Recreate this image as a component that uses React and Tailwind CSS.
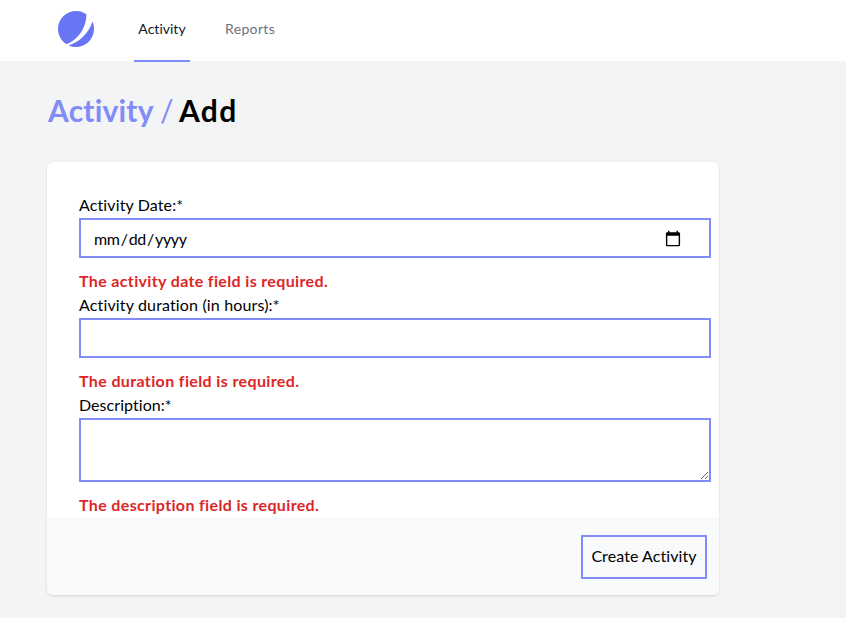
import React from "react";

function Logo() {
  return (
    <svg className="h-9 w-9" viewBox="0 0 48 48" fill="none">
      <path fill="#6875F5" d="M11.395 44.428C4.557 40.198 0 32.632 0 24 0 10.745 10.745 0 24 0a23.891 23.891 0 0113.997 4.502c-.2 17.907-11.097 33.245-26.602 39.926z" />
      <path fill="#6875F5" d="M14.134 45.885A23.914 23.914 0 0024 48c13.255 0 24-10.745 24-24 0-3.516-.756-6.856-2.115-9.866-4.659 15.143-16.608 27.092-31.75 31.751z" />
    </svg>
  );
}

function Field({ label, labelClass, error, errorClass, children }) {
  return (
    <div>
      <label className="flex h-6 items-center pb-0.5 whitespace-nowrap"><span className={labelClass}>{label}</span></label>
      {children}
      <p className="mt-3 flex h-6 items-center pb-0.5 font-bold whitespace-nowrap text-[#dc2626]"><span className={errorClass}>{error}</span></p>
    </div>
  );
}

export default function App() {
  return (
    <div className="min-h-[618px] bg-[#f3f4f6] font-['Lato',sans-serif] text-base leading-6 text-black">
      <nav className="flex h-[62px] bg-linear-to-b from-white from-[61px] to-[#f3f4f6] to-[61px] pl-[58px] text-sm">
        <div className="pt-[11px]"><Logo /></div>
        <a className="ml-10 flex w-14 justify-center border-b-2 border-[#818cf8] pt-[19px] text-[#111827]"><span className="tracking-[0.01px]">Activity</span></a>
        <a className="ml-[35px] pt-[19px] text-[#6b7280]"><span className="tracking-[0.35px]">Reports</span></a>
      </nav>
      <main className="pl-[47px]">
        <h1 className="flex h-[100px] items-start pt-[30px] text-[30px] leading-9 font-bold">
          <span className="w-[113px] pl-px tracking-[0.2px] text-[#818cf8]">Activity</span>
          <span className="w-[18px] font-normal text-[#818cf8]">/</span>
          <span className="pl-px tracking-[1.3px]">Add</span>
        </h1>
        <form className="w-[672px] overflow-hidden rounded-md bg-white shadow-sm">
          <div className="pt-8 pr-2 pl-8">
            <Field label="Activity Date:*" labelClass="tracking-[0.12px]" error="The activity date field is required." errorClass="tracking-[0.35px]">
              <input type="date" className="block h-10 w-full border-2 border-[#818cf8] bg-white pt-[9px] pr-[25px] pb-[7px] pl-3 tracking-[-0.3px] [&::-webkit-calendar-picker-indicator]:h-[18px] [&::-webkit-calendar-picker-indicator]:w-[18px]" />
            </Field>
            <Field label="Activity duration (in hours):*" labelClass="tracking-[0.15px]" error="The duration field is required." errorClass="tracking-[0.37px]">
              <input type="text" className="block h-10 w-full border-2 border-[#818cf8] bg-white px-3" />
            </Field>
            <Field label="Description:*" labelClass="tracking-[0.05px]" error="The description field is required." errorClass="tracking-[0.35px]">
              <textarea className="block h-16 w-full resize border-2 border-[#818cf8] bg-white px-3" />
            </Field>
          </div>
          <div className="flex h-[77px] justify-end bg-[#f9fafb] pt-[17px] pr-3 shadow-[inset_0_1px_0_#f3f4f6]">
            <button type="button" className="h-11 w-[126px] border-2 border-[#818cf8] pb-0.5 tracking-[0.08px] whitespace-nowrap">Create Activity</button>
          </div>
        </form>
      </main>
    </div>
  );
}
